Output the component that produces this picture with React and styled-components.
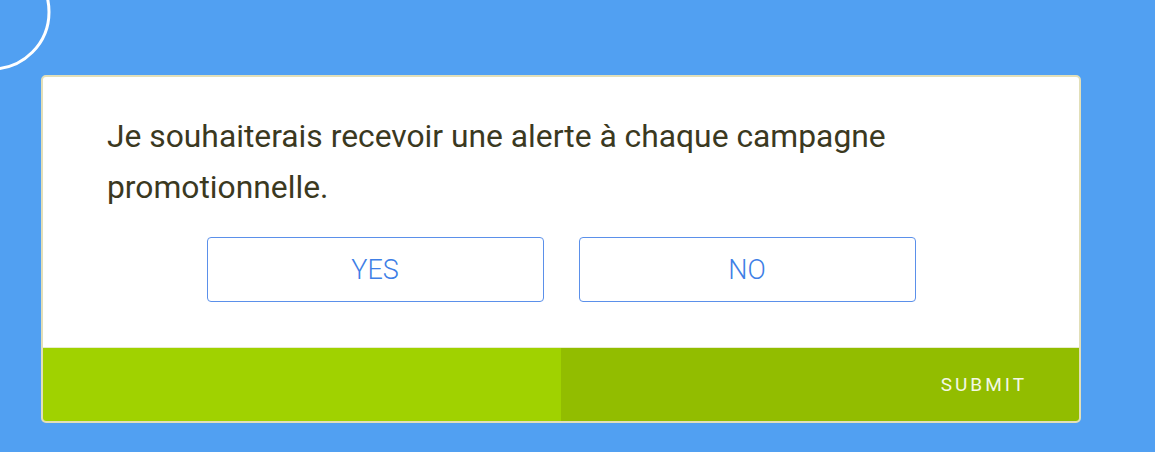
import React from 'react';
import styled, { createGlobalStyle } from 'styled-components';

const GlobalStyle = createGlobalStyle`
  html, body {
    margin: 0;
    padding: 0;
    background: #51a0f2;
    font-family: Roboto, "Liberation Sans", sans-serif;
  }
`;

const Page = styled.div`
  position: relative;
  width: 1155px;
  height: 452px;
  padding: 75px 0 0 41px;
  box-sizing: border-box;
  overflow: hidden;
`;

const Ring = styled.svg`
  position: absolute;
  left: -80px;
  top: -60px;
`;

const Card = styled.div`
  position: relative;
  width: 1040px;
  background: #ffffff;
  border: 2px solid #e2dfb8;
  border-radius: 5px;
  box-sizing: border-box;
  overflow: hidden;
`;

const Body = styled.div`
  padding: 34px 64px 45px;
  display: flex;
  flex-direction: column;
  gap: 24px;
`;

const Question = styled.p`
  margin: 0;
  font-size: 31.8px;
  line-height: 51px;
  color: #3b391f;
  max-width: 860px;
`;

const Choices = styled.div`
  display: flex;
  justify-content: center;
  gap: 35px;
`;

const Choice = styled.button`
  width: 337px;
  height: 65px;
  background: #ffffff;
  border: 1px solid #5b90ea;
  border-radius: 4px;
  font-family: Roboto, "Liberation Sans", sans-serif;
  font-weight: 300;
  font-size: 27px;
  color: #3f7fe6;
  cursor: pointer;
`;

const Footer = styled.div`
  display: grid;
  grid-template-columns: 1fr 1fr;
  height: 73px;
  border-top: 1px solid #e8eccf;
`;

const Progress = styled.div`
  background: #a0d200;
`;

const Submit = styled.button`
  background: #92bd00;
  border: none;
  display: flex;
  align-items: center;
  justify-content: flex-end;
  padding: 0 52px 0 0;
  font-family: Roboto, "Liberation Sans", sans-serif;
  font-size: 19px;
  letter-spacing: 3px;
  color: #f4f8e6;
  cursor: pointer;
`;

export default function App() {
  return (
    <>
      <GlobalStyle />
      <Page>
        <Ring width="140" height="140" viewBox="0 0 140 140">
          <circle cx="72" cy="72" r="57" fill="none" stroke="#ffffff" strokeWidth="3" />
        </Ring>
        <Card>
          <Body>
            <Question>Je souhaiterais recevoir une alerte à chaque campagne promotionnelle.</Question>
            <Choices>
              <Choice>YES</Choice>
              <Choice>NO</Choice>
            </Choices>
          </Body>
          <Footer>
            <Progress />
            <Submit>SUBMIT</Submit>
          </Footer>
        </Card>
      </Page>
    </>
  );
}
